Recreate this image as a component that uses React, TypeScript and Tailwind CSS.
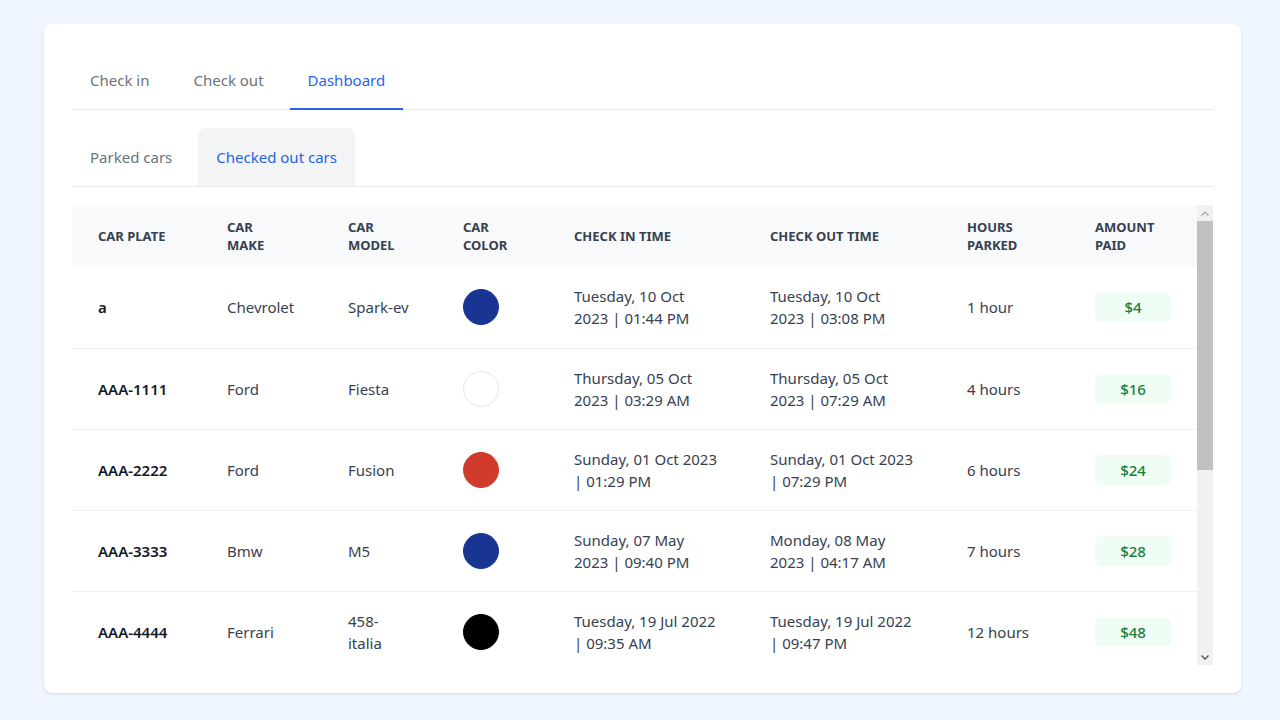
import type { ReactNode } from "react";

type Row = {
  plate: string;
  make: string;
  model: string;
  color: string;
  checkIn: [string, string];
  checkOut: [string, string];
  hours: string;
  amount: string;
};

const ROWS: Row[] = [
  { plate: "a", make: "Chevrolet", model: "Spark-ev", color: "#1a3494", checkIn: ["Tuesday, 10 Oct", "2023 | 01:44 PM"], checkOut: ["Tuesday, 10 Oct", "2023 | 03:08 PM"], hours: "1 hour", amount: "$4" },
  { plate: "AAA-1111", make: "Ford", model: "Fiesta", color: "#ffffff", checkIn: ["Thursday, 05 Oct", "2023 | 03:29 AM"], checkOut: ["Thursday, 05 Oct", "2023 | 07:29 AM"], hours: "4 hours", amount: "$16" },
  { plate: "AAA-2222", make: "Ford", model: "Fusion", color: "#d13b2b", checkIn: ["Sunday, 01 Oct 2023", "| 01:29 PM"], checkOut: ["Sunday, 01 Oct 2023", "| 07:29 PM"], hours: "6 hours", amount: "$24" },
  { plate: "AAA-3333", make: "Bmw", model: "M5", color: "#1a3494", checkIn: ["Sunday, 07 May", "2023 | 09:40 PM"], checkOut: ["Monday, 08 May", "2023 | 04:17 AM"], hours: "7 hours", amount: "$28" },
  { plate: "AAA-4444", make: "Ferrari", model: "458-italia", color: "#000000", checkIn: ["Tuesday, 19 Jul 2022", "| 09:35 AM"], checkOut: ["Tuesday, 19 Jul 2022", "| 09:47 PM"], hours: "12 hours", amount: "$48" },
  { plate: "AAA-5555", make: "Toyota", model: "Corolla", color: "#9ca3af", checkIn: ["Monday, 10 Jul", "2022 | 08:12 AM"], checkOut: ["Monday, 10 Jul", "2022 | 10:12 AM"], hours: "2 hours", amount: "$8" },
  { plate: "AAA-6666", make: "Honda", model: "Civic", color: "#d13b2b", checkIn: ["Friday, 03 Jun", "2022 | 11:05 AM"], checkOut: ["Friday, 03 Jun", "2022 | 02:05 PM"], hours: "3 hours", amount: "$12" },
  { plate: "AAA-7777", make: "Audi", model: "A4", color: "#000000", checkIn: ["Wednesday, 18 May", "2022 | 06:30 PM"], checkOut: ["Wednesday, 18 May", "2022 | 11:30 PM"], hours: "5 hours", amount: "$20" },
  { plate: "AAA-8888", make: "Tesla", model: "Model-3", color: "#ffffff", checkIn: ["Saturday, 02 Apr", "2022 | 07:00 AM"], checkOut: ["Saturday, 02 Apr", "2022 | 03:00 PM"], hours: "8 hours", amount: "$32" },
];

const HEADERS: ReactNode[] = [
  "Car plate",
  <>Car<br />make</>,
  <>Car<br />model</>,
  <>Car<br />color</>,
  "Check in time",
  "Check out time",
  <>Hours<br />parked</>,
  <>Amount<br />paid</>,
];

const WIDTHS = ["w-[129px]", "w-[121px]", "w-[115px]", "w-[111px]", "w-[196px]", "w-[197px]", "w-[128px]", "w-[129px]"];

function Tab({ label, active, filled }: { label: string; active?: boolean; filled?: boolean }) {
  if (filled) {
    return (
      <button
        className={`rounded-t-lg px-[18px] py-[17px] text-[15px] leading-6 ${
          active ? "bg-[#f3f4f6] text-[#2563eb]" : "text-[#6b7280]"
        }`}
      >
        {label}
      </button>
    );
  }
  return (
    <button
      className={`-mb-px border-b-2 px-[18px] py-[16px] text-[15px] leading-6 ${
        active ? "border-[#2563eb] text-[#2563eb]" : "border-transparent text-[#6b7280]"
      }`}
    >
      {label}
    </button>
  );
}

// classic scrollbar, drawn since the headless page hides native ones
function ScrollBar() {
  return (
    <div className="flex w-[16px] shrink-0 flex-col bg-[#f1f1f1]">
      <div className="flex h-[16px] items-center justify-center">
        <svg width="8" height="5" viewBox="0 0 8 5">
          <path d="M0.5 4.5 L4 1 L7.5 4.5" fill="none" stroke="#a3a3a3" strokeWidth="1.2" />
        </svg>
      </div>
      <div className="flex-1">
        <div className="h-[249px] bg-[#c1c1c1]" />
      </div>
      <div className="flex h-[16px] items-center justify-center">
        <svg width="8" height="5" viewBox="0 0 8 5">
          <path d="M0.5 0.5 L4 4 L7.5 0.5" fill="none" stroke="#505050" strokeWidth="1.4" />
        </svg>
      </div>
    </div>
  );
}

export default function App() {
  return (
    <div className="min-h-[720px] bg-[#eff6ff] pb-[24px] pl-[44px] pr-[39px] pt-[24px] font-['Noto_Sans',sans-serif]">
      <div className="rounded-lg bg-white px-[28px] pb-[28px] pt-[28px] shadow-[0_1px_3px_rgba(0,0,0,0.12)]">
        <nav className="flex gap-2 border-b border-[#e5e7eb]">
          <Tab label="Check in" />
          <Tab label="Check out" />
          <Tab label="Dashboard" active />
        </nav>

        <nav className="mt-[18px] flex gap-2 border-b border-[#e5e7eb]">
          <Tab label="Parked cars" filled />
          <Tab label="Checked out cars" filled active />
        </nav>

        <div className="mt-[18px] flex h-[460px]">
          <div className="h-full w-[1126px] overflow-hidden">
            <table className="w-[1126px] table-fixed border-collapse text-left">
              <colgroup>
                {WIDTHS.map((w, i) => (
                  <col key={i} className={w} />
                ))}
              </colgroup>
              <thead>
                <tr className="h-[62px] bg-[#f8f9fa]">
                  {HEADERS.map((h, i) => (
                    <th key={i} className="px-[26px] text-[13px] font-bold uppercase leading-[18px] text-[#374151]">
                      {h}
                    </th>
                  ))}
                </tr>
              </thead>
              <tbody className="text-[15px] leading-[22px] text-[#374151]">
                {ROWS.map((r) => (
                  <tr key={r.plate} className="h-[81px] border-b border-[#f1f2f4]">
                    <td className="px-[26px] font-semibold text-[#111827]">{r.plate}</td>
                    <td className="px-[26px]">{r.make}</td>
                    <td className="px-[26px] break-words">{r.model}</td>
                    <td className="px-[26px]">
                      <span
                        className="block size-9 rounded-full border"
                        style={{ backgroundColor: r.color, borderColor: r.color === "#ffffff" ? "#e5e7eb" : r.color }}
                      />
                    </td>
                    <td className="px-[26px]">
                      <span className="block">{r.checkIn[0]}</span>
                      <span className="block">{r.checkIn[1]}</span>
                    </td>
                    <td className="px-[26px]">
                      <span className="block">{r.checkOut[0]}</span>
                      <span className="block">{r.checkOut[1]}</span>
                    </td>
                    <td className="px-[26px]">{r.hours}</td>
                    <td className="px-[26px]">
                      <span className="block w-[76px] rounded-md bg-[#f0fdf4] py-[4px] text-center font-medium text-[#15803d]">
                        {r.amount}
                      </span>
                    </td>
                  </tr>
                ))}
              </tbody>
            </table>
          </div>
          <ScrollBar />
        </div>
      </div>
    </div>
  );
}
